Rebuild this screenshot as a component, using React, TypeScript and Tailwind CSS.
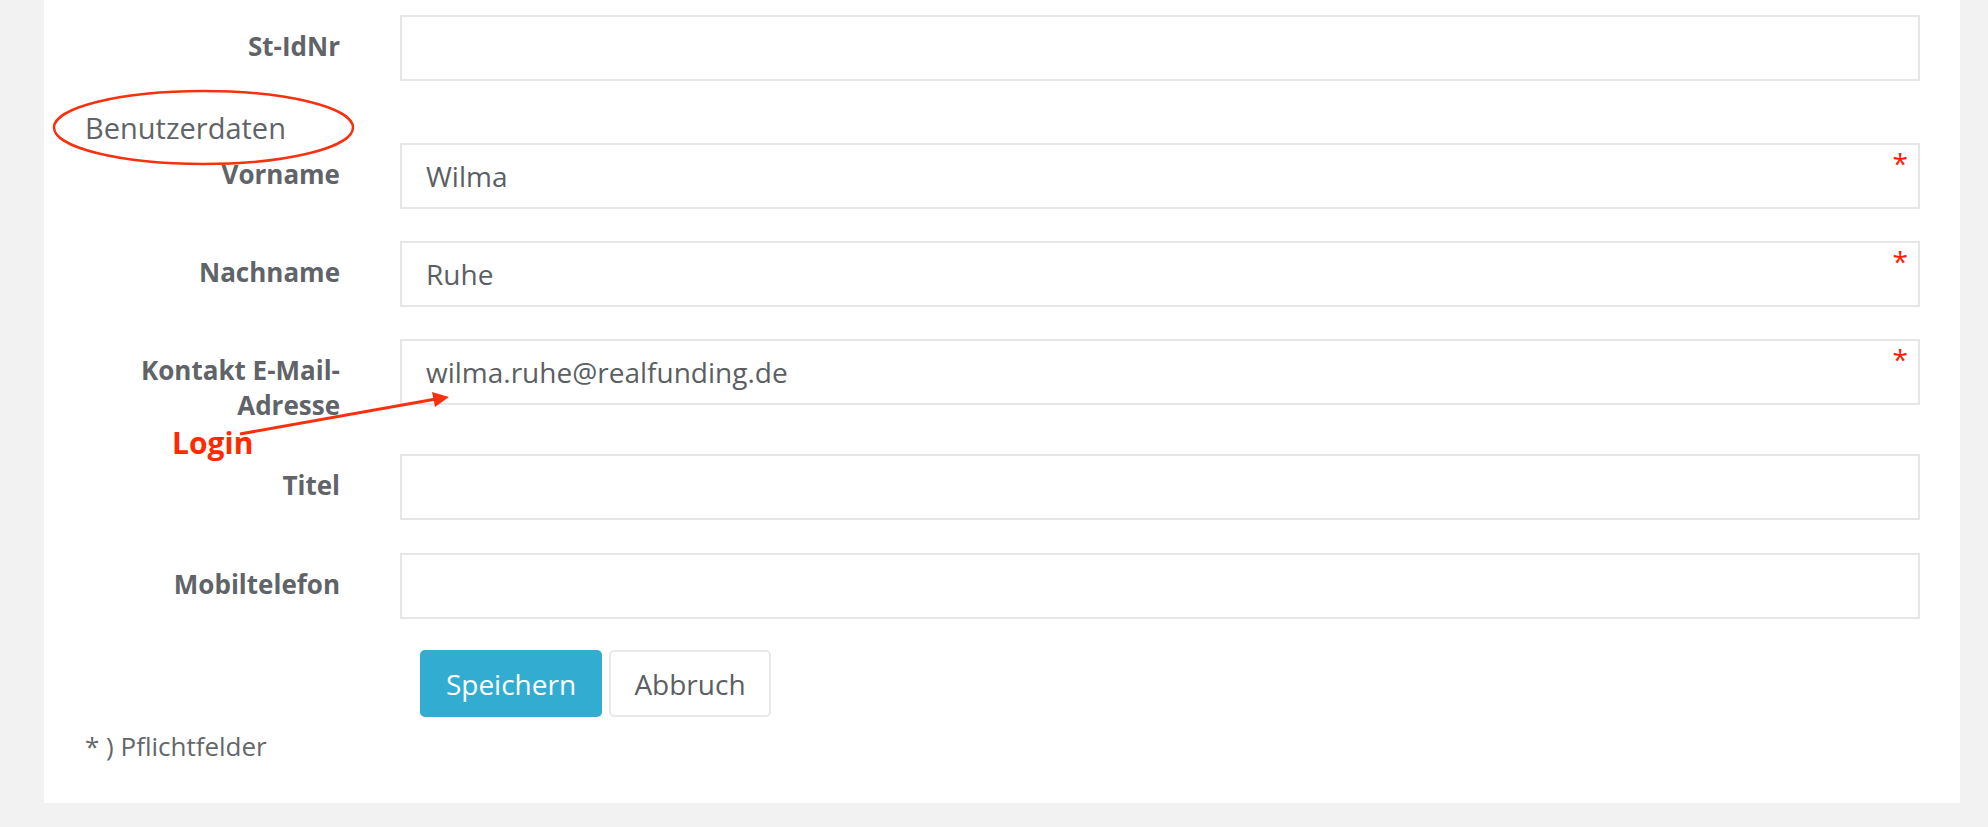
import React from 'react';

type Field = {
  label: string;
  value?: string;
  required?: boolean;
};

const FieldRow = ({ label, value, required, className = '' }: Field & { className?: string }) => (
  <div className={`flex items-start ${className}`}>
    <label className="w-[255px] shrink-0 pt-[14px] pl-[30px] text-right text-[26px] font-bold leading-[35px] text-[#606468]">
      {label}
    </label>
    <div className="relative ml-[60px] flex-1">
      <div className="flex h-[66px] items-center border-2 border-[#e6e6e6] bg-white px-[24px] text-[28px] text-[#5b5f63]">
        {value}
      </div>
      {required && (
        <span className="absolute right-[12px] top-[6px] text-[28px] leading-none text-[#ff1a00]">*</span>
      )}
    </div>
  </div>
);

export default function App() {
  return (
    <div className="min-h-[827px] bg-[#f2f2f2] pl-[44px] pr-[28px] font-['Open_Sans',sans-serif]">
      <div className="relative bg-white pl-[41px] pr-[40px] pt-[15px] pb-[39px]">
        <FieldRow label="St-IdNr" />

        <div className="h-[62px] pt-[29px] text-[29px] leading-[36px] text-[#606468]">Benutzerdaten</div>

        <FieldRow label="Vorname" value="Wilma" required className="mb-[32px]" />
        <FieldRow label="Nachname" value="Ruhe" required className="mb-[32px]" />
        <FieldRow label="Kontakt E-Mail-Adresse" value="wilma.ruhe@realfunding.de" required className="mb-[31px]" />
        <FieldRow label="Titel" className="mb-[33px]" />
        <FieldRow label="Mobiltelefon" className="mb-[31px]" />

        <div className="ml-[335px] flex gap-[7px]">
          <button className="h-[67px] w-[182px] rounded-[5px] bg-[#33acd2] text-[28px] text-white">Speichern</button>
          <button className="h-[67px] w-[162px] rounded-[5px] border-2 border-[#e6e8ea] bg-white text-[28px] text-[#5b5f63]">
            Abbruch
          </button>
        </div>

        <div className="mt-[11px] text-[26px] leading-[36px] text-[#63676b]">* ) Pflichtfelder</div>

        <svg className="pointer-events-none absolute left-[-44px] top-0" width="1988" height="827">
          <ellipse cx="203.5" cy="127.5" rx="149.5" ry="36.5" fill="none" stroke="#f7310f" strokeWidth="2.5" />
          <line x1="240" y1="434" x2="436" y2="399" stroke="#f7310f" strokeWidth="3" />
          <polygon points="449,397 432,392 435,407" fill="#f7310f" />
        </svg>
        <div className="absolute left-[128px] top-[425px] text-[30px] font-bold leading-[36px] text-[#ff2a00]">Login</div>
      </div>
    </div>
  );
}
